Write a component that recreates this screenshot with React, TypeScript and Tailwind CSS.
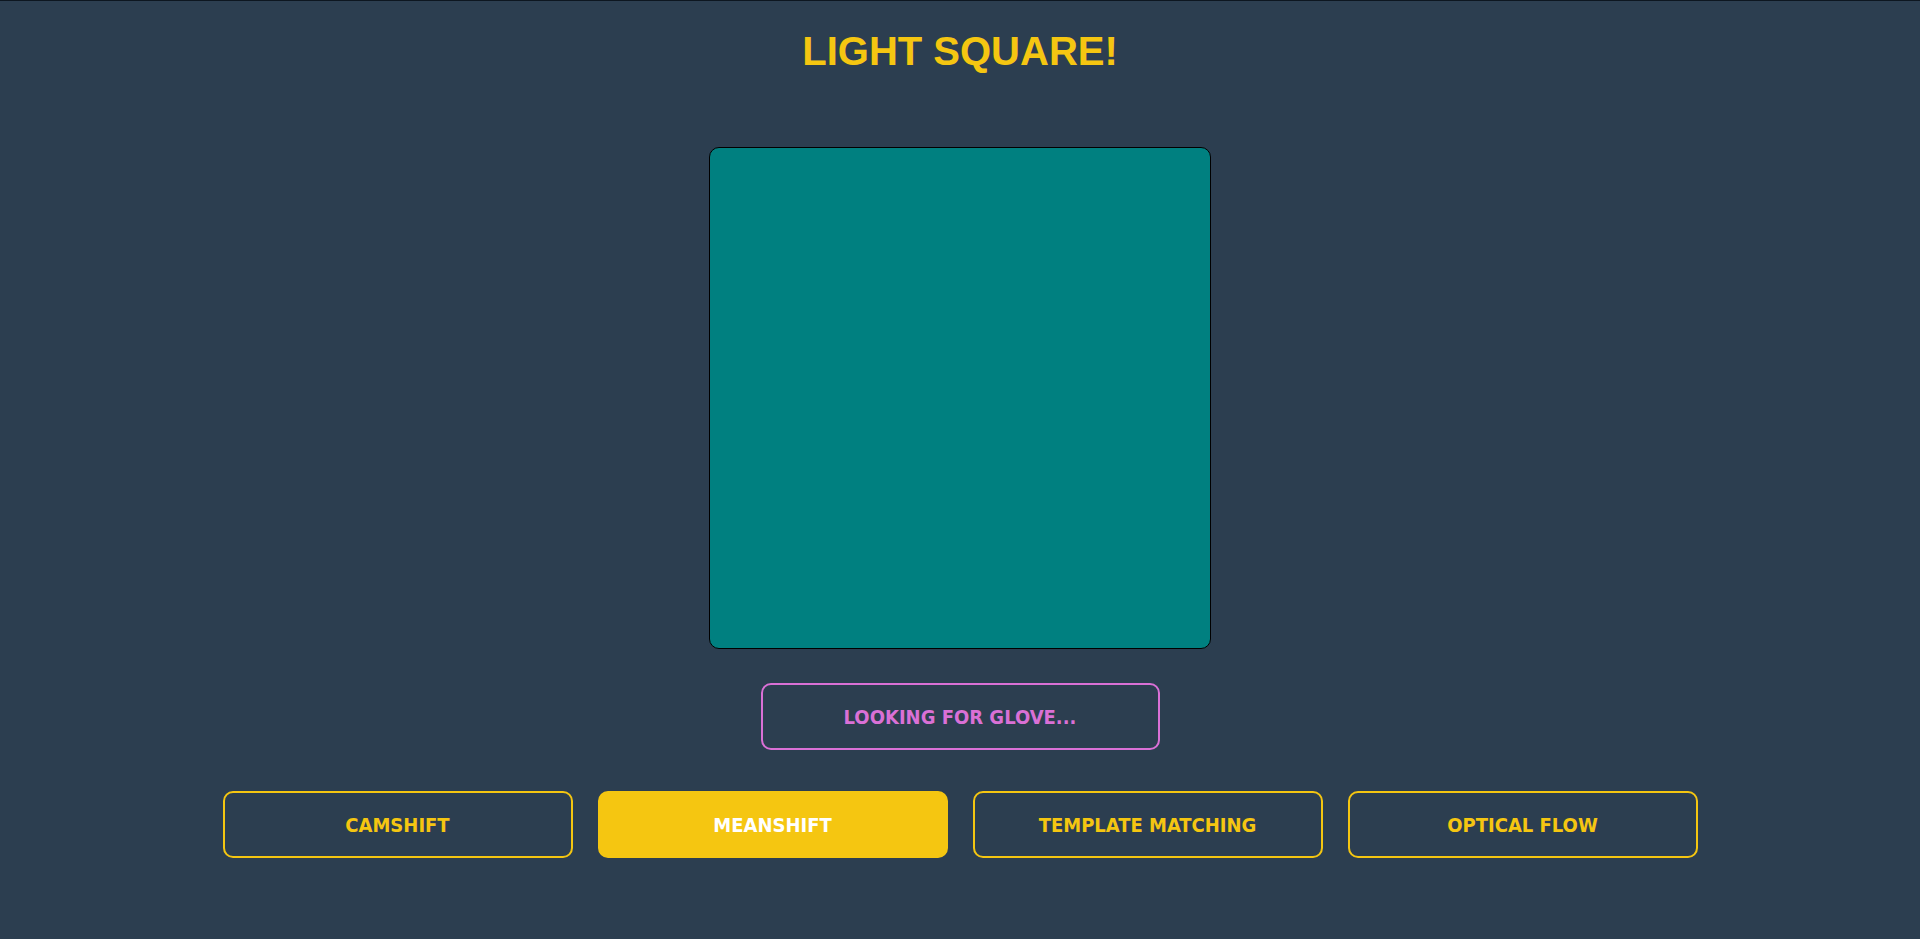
const modes = ["CAMSHIFT", "MEANSHIFT", "TEMPLATE MATCHING", "OPTICAL FLOW"];

const App = (): JSX.Element => {
  const active = "MEANSHIFT";

  return (
    <div className="min-h-[939px] w-full bg-[#2c3e50] border-t border-[#0d1620] flex flex-col items-center">
      <h1
        className="pt-[27px] text-[40px] leading-[46px] font-bold text-[#f5c611]"
        style={{ fontFamily: '"Liberation Sans", Arial, sans-serif' }}
      >
        LIGHT SQUARE!
      </h1>

      <div className="mt-[73px] w-[502px] h-[502px] bg-[#008080] border border-black rounded-[10px]"></div>

      <div
        className="mt-[34px] w-[399px] h-[67px] flex items-center justify-center border-2 border-[#da70d6] rounded-[10px] text-[#da70d6] text-[20px] font-bold font-stretch-condensed"
        style={{ fontFamily: '"DejaVu Sans Condensed", "DejaVu Sans", Verdana, sans-serif' }}
      >
        LOOKING FOR GLOVE...
      </div>

      <div
        className="mt-[41px] flex gap-[25px] font-stretch-condensed"
        style={{ fontFamily: '"DejaVu Sans Condensed", "DejaVu Sans", Verdana, sans-serif' }}
      >
        {modes.map((mode) => (
          <button
            key={mode}
            className={
              mode === active
                ? "w-[350px] h-[67px] rounded-[10px] border-2 border-[#f5c611] bg-[#f5c611] text-white text-[20px] font-bold"
                : "w-[350px] h-[67px] rounded-[10px] border-2 border-[#f5c611] text-[#f5c611] text-[20px] font-bold"
            }
          >
            {mode}
          </button>
        ))}
      </div>
    </div>
  );
};

export default App;
